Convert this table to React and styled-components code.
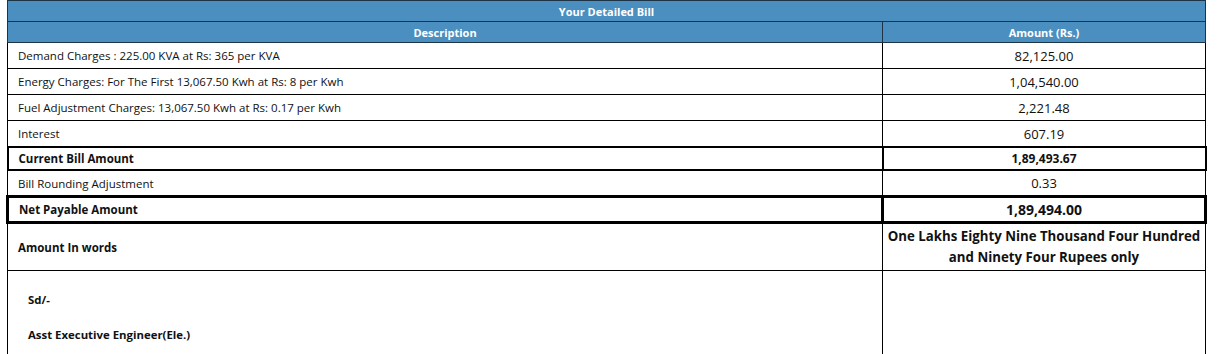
import React from 'react';
import styled, { createGlobalStyle } from 'styled-components';

const GlobalStyle = createGlobalStyle`
  body {
    margin: 0;
    background: #fff;
    font-family: "Open Sans", "Noto Sans", sans-serif;
    color: #111;
  }
`;

const Page = styled.div`
  padding: 0 15px 0 6px;
`;

const BillTable = styled.table`
  width: 1198px;
  border-collapse: collapse;
  table-layout: fixed;
  font-size: 11.5px;
`;

const HeadCell = styled.th`
  background: #4a8fbf;
  color: #fff;
  font-weight: 700;
  font-size: 11px;
  height: 20px;
  padding: 0;
  border: 1px solid #1d3446;
  text-align: center;
`;

const Cell = styled.td`
  height: ${(p) => p.$h || 25}px;
  padding: 0 0 0 10px;
  border: ${(p) => p.$weight || 1}px solid #000;
  text-align: ${(p) => (p.$center ? 'center' : 'left')};
  font-weight: ${(p) => (p.$bold ? 700 : 400)};
  font-size: ${(p) => p.$size || 11.5}px;
  line-height: ${(p) => p.$lh || 'normal'};
  vertical-align: middle;
  ${(p) => p.$center && 'padding: 0;'}
`;

const SignCell = styled.td`
  height: 61px;
  border: 1px solid #000;
  border-bottom: none;
  padding: 19px 0 0 20px;
  vertical-align: top;
  font-weight: 700;
  font-size: 11.4px;
`;

const SignLine = styled.div`
  height: 35px;
  line-height: 20px;
`;

const rows = [
  ['Demand Charges : 225.00 KVA at Rs: 365 per KVA', '82,125.00'],
  ['Energy Charges: For The First 13,067.50 Kwh at Rs: 8 per Kwh', '1,04,540.00'],
  ['Fuel Adjustment Charges: 13,067.50 Kwh at Rs: 0.17 per Kwh', '2,221.48'],
  ['Interest', '607.19'],
];

export default function App() {
  return (
    <Page>
      <GlobalStyle />
      <BillTable>
        <colgroup>
          <col style={{ width: 875 }} />
          <col style={{ width: 323 }} />
        </colgroup>
        <thead>
          <tr>
            <HeadCell colSpan={2}>Your Detailed Bill</HeadCell>
          </tr>
          <tr>
            <HeadCell>Description</HeadCell>
            <HeadCell>Amount (Rs.)</HeadCell>
          </tr>
        </thead>
        <tbody>
          {rows.map(([desc, amt]) => (
            <tr key={desc}>
              <Cell>{desc}</Cell>
              <Cell $center $size={13}>{amt}</Cell>
            </tr>
          ))}
          <tr>
            <Cell $weight={2} $bold $h={21}>Current Bill Amount</Cell>
            <Cell $weight={2} $bold $center $size={12} $h={21}>1,89,493.67</Cell>
          </tr>
          <tr>
            <Cell $h={24}>Bill Rounding Adjustment</Cell>
            <Cell $center $size={13} $h={24}>0.33</Cell>
          </tr>
          <tr>
            <Cell $weight={3} $bold $h={23}>Net Payable Amount</Cell>
            <Cell $weight={3} $bold $center $size={14} $h={23}>1,89,494.00</Cell>
          </tr>
          <tr>
            <Cell $bold $h={46}>Amount In words</Cell>
            <Cell $bold $center $size={13.25} $lh="21px" $h={46}>
              One Lakhs Eighty Nine Thousand Four Hundred and Ninety Four Rupees only
            </Cell>
          </tr>
          <tr>
            <SignCell>
              <SignLine>Sd/-</SignLine>
              <SignLine>Asst Executive Engineer(Ele.)</SignLine>
            </SignCell>
            <SignCell />
          </tr>
        </tbody>
      </BillTable>
    </Page>
  );
}
